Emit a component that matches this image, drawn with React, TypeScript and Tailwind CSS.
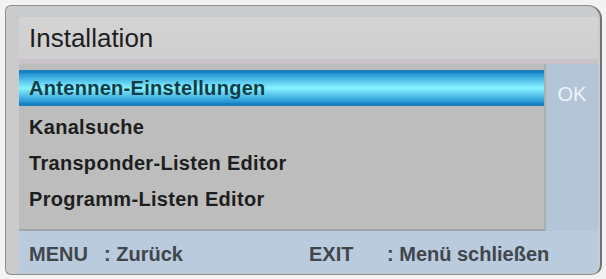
const items = [
  "Antennen-Einstellungen",
  "Kanalsuche",
  "Transponder-Listen Editor",
  "Programm-Listen Editor",
]

const App = () => {
  return (
    <div className="w-[606px] h-[279px] bg-[#f3f3f3] pt-[5px] pl-[5px] pr-[4px] pb-[4px] font-['Liberation_Sans',Arial,sans-serif]">
      {/* outer frame */}
      <div className="h-full rounded-tr-[14px] rounded-br-[10px] rounded-l-[6px] bg-[#c9cbcd] border border-[#8d9196] border-r-2 border-r-[#6f7479] pl-[13px] pt-[11px] pr-[2px] pb-[1px]">
        <div className="h-full flex flex-col bg-[#b9cbdc] rounded-br-[8px] overflow-hidden">
          {/* header */}
          <div className="h-[42px] shrink-0 bg-gradient-to-b from-[#d4d4d4] to-[#cecece] flex items-center pl-[10px] pt-[1px] text-[26px] text-[#1e1e1e]">
            Installation
          </div>
          <div className="h-[5px] shrink-0 bg-[#c9c2c8]"></div>
          {/* body */}
          <div className="flex flex-1">
            <div className="flex-1 bg-[#bdbdbd] border-r-2 border-r-[#a9aeb3] border-b-2 border-b-[#9ea6ad] flex flex-col pt-[6px]">
              {items.map((item, i) => (
                <div
                  key={item}
                  className={
                    i === 0
                      ? "h-[36px] mb-[3px] flex items-center pl-[10px] text-[20px] tracking-[0.3px] font-bold text-[#123c48] bg-gradient-to-b from-[#1b8fd2] via-[#86f4ff] to-[#1a8fd0] border-y-[3px] border-[#1a80c0]"
                      : "h-[36px] flex items-center pl-[10px] text-[20px] tracking-[0.3px] font-bold text-[#1e1e1e]"
                  }
                >
                  {item}
                </div>
              ))}
            </div>
            <div className="w-[52px] shrink-0 bg-[#b3c5d7] flex flex-col items-center pt-[15px] text-[20px] text-[#eef3f8]">
              OK
            </div>
          </div>
          {/* footer */}
          <div className="h-[42px] shrink-0 flex items-center pl-[10px] pt-[4px] text-[20px] text-[#41464c] font-bold">
            <span className="w-[75px]">MENU</span>
            <span className="w-[205px]">: Zurück</span>
            <span className="w-[78px]">EXIT</span>
            <span>: Menü schließen</span>
          </div>
        </div>
      </div>
    </div>
  )
}

export default App
